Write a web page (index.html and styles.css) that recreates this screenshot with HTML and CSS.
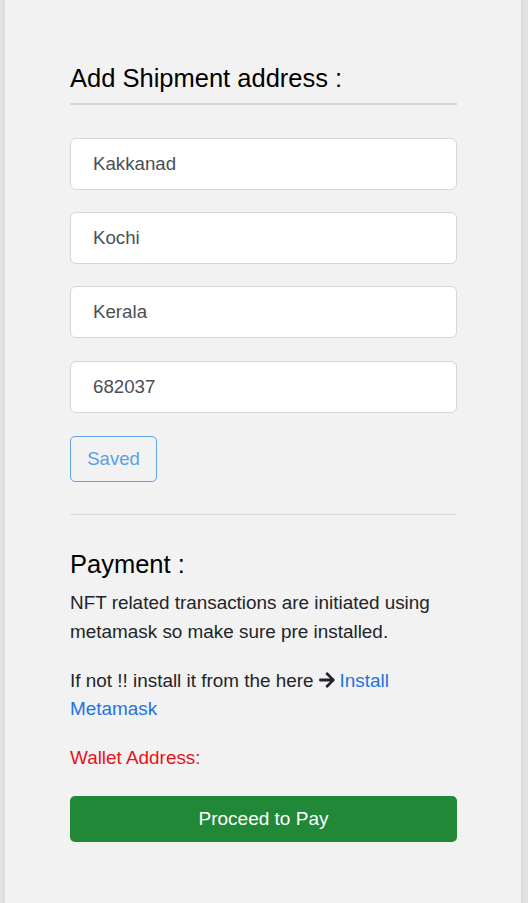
FILE: index.html
```html
<!DOCTYPE html>
<html lang="en">
<head>
<meta charset="utf-8">
<title>Checkout</title>
<link rel="stylesheet" href="styles.css">
</head>
<body>
<main class="card">
  <h2 class="title">Add Shipment address :</h2>
  <hr class="rule-thick">
  <form class="address">
    <input class="field" type="text" value="Kakkanad">
    <input class="field" type="text" value="Kochi">
    <input class="field" type="text" value="Kerala">
    <input class="field" type="text" value="682037">
    <button class="btn-saved" type="button">Saved</button>
  </form>
  <hr class="rule-thin">
  <h2 class="title pay-title">Payment :</h2>
  <p class="text">NFT related transactions are initiated using metamask so make sure pre installed.</p>
  <p class="text">If not !! install it from the here<svg class="arrow" viewBox="0 0 448 512" width="18" height="18"><path d="M190.5 66.9l22.2-22.2c9.4-9.4 24.6-9.4 33.9 0L441 239c9.4 9.4 9.4 24.6 0 33.9L246.6 467.3c-9.4 9.4-24.6 9.4-33.9 0l-22.2-22.2c-9.5-9.5-9.3-25 .4-34.3L311.4 296H24c-13.3 0-24-10.7-24-24v-32c0-13.3 10.7-24 24-24h287.4L190.9 101.2c-9.8-9.3-10-24.8-.4-34.3z" fill="#212529"/></svg><a class="link" href="#">Install Metamask</a></p>
  <p class="text wallet">Wallet Address:</p>
  <button class="btn-pay" type="button">Proceed to Pay</button>
</main>
</body>
</html>
```
FILE: styles.css
```css
html, body {
  margin: 0;
  padding: 0;
}
body {
  background: #e2e2e2;
  font-family: "Liberation Sans", Arial, sans-serif;
  min-height: 903px;
}
.card {
  background: #f2f2f2;
  margin: 0 7px 0 5px;
  padding: 64px 64px 40px 65px;
  min-height: 903px;
  box-sizing: border-box;
  box-shadow: 0 0 4px rgba(0,0,0,0.08);
}
.title {
  font-size: 25.5px;
  font-weight: 400;
  line-height: 28.8px;
  color: #000;
  margin: 0;
}
.rule-thick {
  border: 0;
  border-top: 2px solid #d6d6d6;
  margin: 10px 0 33px;
}
.address {
  display: flex;
  flex-direction: column;
  align-items: flex-start;
  gap: 22.3px;
  margin: 0;
}
.field {
  box-sizing: border-box;
  width: 100%;
  height: 52px;
  border: 1px solid #d3d6da;
  border-radius: 6px;
  background: #fff;
  padding: 0 22px;
  font-family: "Liberation Sans", Arial, sans-serif;
  font-size: 18.7px;
  color: #495057;
  outline: none;
}
.btn-saved {
  box-sizing: border-box;
  height: 46px;
  width: 87px;
  margin-top: 0.7px;
  border: 1px solid #5ea3ea;
  border-radius: 5px;
  background: transparent;
  color: #55a0ee;
  font-family: "Liberation Sans", Arial, sans-serif;
  font-size: 18.5px;
  padding: 0;
}
.rule-thin {
  border: 0;
  border-top: 1px solid #d9d9d9;
  margin: 32px 0 35px;
}
.pay-title {
  margin-bottom: 10.6px;
}
.text {
  font-size: 18.9px;
  line-height: 28.8px;
  color: #212529;
  margin: 0 0 20px;
}
.arrow {
  vertical-align: -2px;
  margin: 0 4px 0 4px;
}
.link {
  color: #1f74e2;
  text-decoration: none;
}
.wallet {
  color: #e8121c;
  margin-bottom: 22.6px;
}
.btn-pay {
  display: block;
  box-sizing: border-box;
  width: 100%;
  height: 46px;
  border: 0;
  border-radius: 5px;
  background: #218838;
  color: #fff;
  font-family: "Liberation Sans", Arial, sans-serif;
  font-size: 19px;
}
```
